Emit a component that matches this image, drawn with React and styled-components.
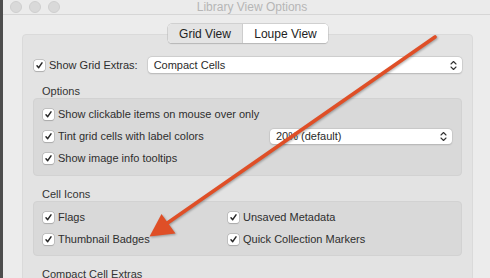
import styled, { createGlobalStyle } from "styled-components";

const Global = createGlobalStyle`
  html, body { margin: 0; padding: 0; background: #ebebeb; }
  * { box-sizing: border-box; }
`;

const Screen = styled.div`
  position: relative;
  width: 490px;
  height: 278px;
  overflow: hidden;
  display: flex;
  font-family: "Liberation Sans", Arial, sans-serif;
  color: #2e2e2e;
`;

const Edge = styled.div`
  width: 3px;
  background: #4d4d4d;
`;

const Win = styled.div`
  flex: 1;
  display: flex;
  flex-direction: column;
  background: #ececec;
`;

const TitleBar = styled.div`
  height: 19px;
  display: grid;
  grid-template-columns: 1fr auto 1fr;
  align-items: center;
  padding-left: 7px;
  background: #ebebeb;
  border-bottom: 1px solid #d6d6d6;
`;

const Lights = styled.div`
  display: flex;
  gap: 7px;
`;

const Light = styled.span`
  width: 12px;
  height: 12px;
  border-radius: 50%;
  background: #d9d9d9;
  border: 1px solid #cfcfcf;
`;

const Title = styled.div`
  font-size: 12px;
  color: #b6b6b6;
  margin-left: 4px;
`;

const Body = styled.div`
  padding: 9px 17px 0 19px;
  display: flex;
  flex-direction: column;
`;

const Tabs = styled.div`
  position: relative;
  z-index: 1;
  align-self: center;
  margin-left: 1px;
  display: flex;
  height: 19px;
  border-radius: 4px;
  background: #fff;
  box-shadow: 0 0 0 0.5px #b9b9b9, 0 0.5px 1px rgba(0, 0, 0, 0.2);
  overflow: hidden;
`;

const Tab = styled.div`
  width: ${(p) => p.w}px;
  display: flex;
  align-items: center;
  justify-content: center;
  font-size: 12px;
  color: #222;
  background: ${(p) => (p.active ? "#e4e4e4" : "#ffffff")};
  border-right: ${(p) => (p.active ? "1px solid #cdcdcd" : "none")};
`;

const Group = styled.div`
  margin-top: -9px;
  height: 260px;
  padding: 22px 10px 0 10px;
  background: #e3e3e3;
  border: 1px solid #dadada;
  border-radius: 4px;
  display: flex;
  flex-direction: column;
`;

const TopRow = styled.div`
  display: flex;
  align-items: center;
  height: 16px;
  padding-left: 1px;
  font-size: 11px;
`;

const Popup = styled.div`
  height: ${(p) => p.h || 16}px;
  width: ${(p) => (p.w ? `${p.w}px` : "auto")};
  flex: ${(p) => (p.w ? "none" : "1")};
  margin-left: ${(p) => p.ml || 0}px;
  background: #fff;
  border-radius: 4px;
  box-shadow: 0 0 0 0.5px #c2c2c2, 0 0.5px 1.5px rgba(0, 0, 0, 0.22);
  display: flex;
  align-items: center;
  justify-content: space-between;
  padding: 0 5px 0 6px;
  font-size: 11px;
  color: #2a2a2a;
`;

const SectionLabel = styled.div`
  margin-top: 11px;
  height: 14px;
  line-height: 14px;
  padding-left: 9px;
  font-size: 11px;
  color: #333;
`;

const Panel = styled.div`
  background: #d9d9d9;
  border: 1px solid #d2d2d2;
  border-radius: 4px;
  padding: ${(p) => p.pad};
  display: ${(p) => (p.cols ? "grid" : "block")};
  grid-template-columns: 185px 1fr;
`;

const Row = styled.div`
  height: 22px;
  display: flex;
  align-items: center;
  padding-left: 9px;
  padding-right: 9px;
  font-size: 11px;
`;

const Box = styled.span`
  width: 11px;
  height: 11px;
  flex: none;
  border-radius: 2.5px;
  background: #fff;
  box-shadow: 0 0 0 0.5px #a9a9a9, 0 0.5px 1px rgba(0, 0, 0, 0.2);
  display: flex;
  align-items: center;
  justify-content: center;
  margin-right: 4px;
`;

const Overlay = styled.svg`
  position: absolute;
  left: 0;
  top: 0;
  pointer-events: none;
  filter: drop-shadow(1px 1.5px 1px rgba(0, 0, 0, 0.3));
`;

const Check = () => (
  <Box>
    <svg width="9" height="9" viewBox="0 0 9 9">
      <path d="M2 4.8 L3.7 6.7 L7 1.8" fill="none" stroke="#262626" strokeWidth="1.5" strokeLinecap="round" strokeLinejoin="round" />
    </svg>
  </Box>
);

const Chevrons = () => (
  <svg width="7" height="11" viewBox="0 0 7 11">
    <path d="M1 4 L3.5 1.5 L6 4 M1 7 L3.5 9.5 L6 7" fill="none" stroke="#333" strokeWidth="1.1" strokeLinecap="round" strokeLinejoin="round" />
  </svg>
);

const Option = ({ children, extra }) => (
  <Row>
    <Check />
    {children}
    {extra}
  </Row>
);

export default function App() {
  return (
    <Screen>
      <Global />
      <Edge />
      <Win>
        <TitleBar>
          <Lights>
            <Light />
            <Light />
            <Light />
          </Lights>
          <Title>Library View Options</Title>
          <div />
        </TitleBar>
        <Body>
          <Tabs>
            <Tab w={75} active>Grid View</Tab>
            <Tab w={85}>Loupe View</Tab>
          </Tabs>
          <Group>
            <TopRow>
              <Check />
              Show Grid Extras:
              <Popup ml={10}>
                Compact Cells
                <Chevrons />
              </Popup>
            </TopRow>

            <SectionLabel>Options</SectionLabel>
            <Panel pad="4px 0 6px">
              <Option>Show clickable items on mouse over only</Option>
              <Option
                extra={
                  <Popup w={182} h={15} ml={0} style={{ marginLeft: "auto" }}>
                    20% (default)
                    <Chevrons />
                  </Popup>
                }
              >
                Tint grid cells with label colors
              </Option>
              <Option>Show image info tooltips</Option>
            </Panel>

            <SectionLabel>Cell Icons</SectionLabel>
            <Panel pad="4px 0 5px" cols>
              <Option>Flags</Option>
              <Option>Unsaved Metadata</Option>
              <Option>Thumbnail Badges</Option>
              <Option>Quick Collection Markers</Option>
            </Panel>

            <SectionLabel>Compact Cell Extras</SectionLabel>
          </Group>
        </Body>
      </Win>
      <Overlay width="490" height="278" viewBox="0 0 490 278">
        <line x1="435" y1="37" x2="166" y2="224" stroke="#df4f27" strokeWidth="3.6" strokeLinecap="round" />
        <polygon points="149.5,236.5 161.5,214 175.5,233.5" fill="#df4f27" />
      </Overlay>
    </Screen>
  );
}
